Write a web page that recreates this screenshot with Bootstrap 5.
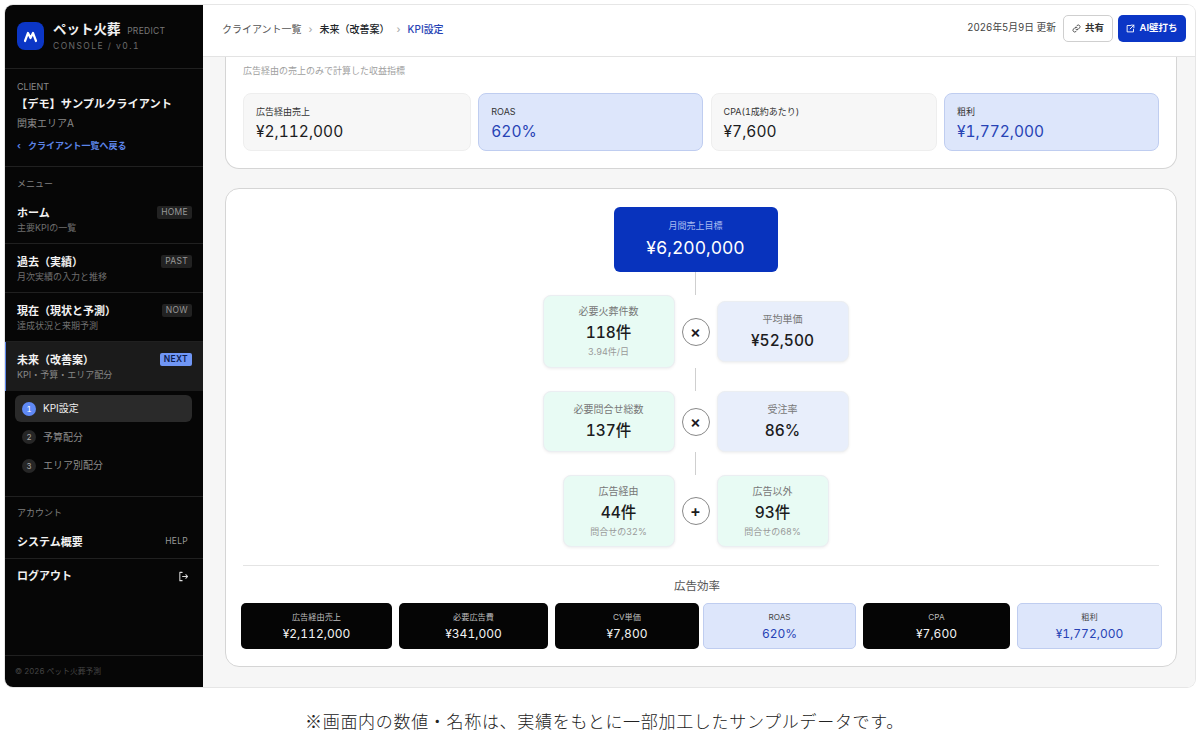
<!DOCTYPE html>
<html lang="ja">
<head>
  <meta charset="UTF-8">
  <meta name="viewport" content="width=device-width, initial-scale=1.0">
  <title>ペット火葬 PREDICT CONSOLE</title>
  <link rel="stylesheet" href="https://cdn.jsdelivr.net/npm/bootstrap@5.3.0/dist/css/bootstrap.min.css">
  <style>
    html, body { height: 751px; overflow: hidden; }
    body { background: #fff; color: #1c1c1e; font-family: Inter, "Noto Sans CJK JP", sans-serif; font-variant-numeric: tabular-nums; }
    .frame { height: 682px; margin: 5px 5px 0; border-radius: 8px; overflow: hidden; box-shadow: 0 0 0 1px #e6e6e6; }
    .side { width: 198px; background: #060606; color: #f2f2f2; }
    .side-sec { border-bottom: 1px solid #202020; padding-left: 12px; padding-right: 11px; }
    .brand { height: 64px; padding-top: 17px; gap: 9px; }
    .logo { width: 27px; height: 28px; border-radius: 8px; background: #0b36c6; }
    .brand-name { font-size: 13.5px; font-weight: 700; line-height: 16px; margin-top: -1px; }
    .brand-name small { font-size: 8.5px; font-weight: 400; color: #777; letter-spacing: .3px; margin-left: 3px; }
    .brand-sub { font-size: 8.5px; color: #6c6c6c; letter-spacing: 1.45px; margin-top: 1px; }
    .client { height: 98px; padding-top: 12px; }
    .client-label { font-size: 9px; line-height: 12px; color: #8a8a8a; }
    .client-name { font-size: 11.2px; font-weight: 700; line-height: 16px; margin-top: 3px; margin-left: -1px; }
    .client-area { font-size: 10px; color: #8a8a8a; line-height: 14px; margin-top: 4px; }
    .back { font-size: 9px; font-weight: 700; color: #5c84e8; line-height: 14px; margin-top: 9px; gap: 7px; text-decoration: none; }
    .sec-label { font-size: 9px; color: #808080; line-height: 12px; padding: 11px 12px 0; height: 28px; }
    .sec-label.acct-label { padding-top: 10px; }
    .item { height: 49px; padding-top: 10px; }
    .item-title { font-size: 11px; font-weight: 700; line-height: 16px; }
    .item-sub { font-size: 9px; color: #6f6f6f; line-height: 13px; }
    .tag { font-size: 8.5px; line-height: 13px; padding: 0 4px; border-radius: 2px; background: #222; color: #999; letter-spacing: .3px; }
    .tag-row { margin-top: 1px; }
    .item.active { background: #1b1b1b; box-shadow: inset 1px 0 0 #5c84e8; }
    .item.active .item-sub { color: #888; }
    .tag.next { background: #7096f5; color: #0b1c4f; font-weight: 600; }
    .steps { height: 106px; padding: 4px 11px 0 10px; }
    .step { height: 27px; margin-bottom: 1.5px; padding-left: 7px; gap: 7px; font-size: 10px; color: #8b8b8b; border-radius: 6px; }
    .step.active { background: #2a2a2a; color: #eee; }
    .step-no { width: 14px; height: 14px; border-radius: 50%; background: #262626; font-size: 8px; color: #aaa; }
    .step.active .step-no { background: #5f89f5; color: #fff; }
    .acct { height: 34px; }
    .logout-icon { margin-right: 3px; }
    .side-foot { padding: 10px 10px 0; font-size: 7.8px; color: #444; height: 32px; border-top: 1px solid #202020; }

    .main { background: #f6f6f6; min-width: 0; }
    .topbar { height: 52px; background: #fff; border-bottom: 1px solid #e3e3e3; padding: 0 9px 4px 19px; }
    .breadcrumb { --bs-breadcrumb-divider: '›'; --bs-breadcrumb-item-padding-x: 7px; --bs-breadcrumb-divider-color: #aaa; --bs-breadcrumb-item-active-color: #2743b5; font-size: 10px; line-height: 14px; margin: 0; color: #555; }
    .head-tools { gap: 5px; }
    .updated { font-size: 9.7px; color: #444; margin-right: 2px; }
    .btn-share, .btn-ai { height: 27px; font-size: 9.5px; font-weight: 600; padding: 0; gap: 4px; border-radius: 5px; }
    .btn-share { width: 50px; background: #fff; color: #333; border: 1px solid #cfcfcf; }
    .btn-ai { width: 68px; background: #0b36c6; color: #fff; border: 0; }

    .content { padding: 0 18px 20px 22px; gap: 19px; }
    .panel { background: #fff; border: 1px solid #d5d5d5; border-radius: 14px; }
    .panel-top { height: 112px; padding: 8px 17px 0; border-top: 0; border-top-left-radius: 0; border-top-right-radius: 0; }
    .panel-note { font-size: 9px; line-height: 11px; color: #a0a0a0; margin-bottom: 17px; }
    .kpis { display: grid; grid-template-columns: 228px 225px 226px 215px; gap: 7.3px; }
    .kpi { height: 58px; padding: 12px 12px 0; border-radius: 8px; background: #f7f7f7; border: 1px solid #eee; }
    .kpi-label { font-size: 9px; line-height: 12px; color: #333; }
    .kpi-val { font-size: 15.5px; line-height: 21px; margin-top: 3px; color: #1c1c1e; }
    .kpi.hl { background: #dde6fb; border-color: #bfcdf0; }
    .kpi.hl .kpi-val { color: #2743b5; }

    .panel-tree { height: 479px; padding: 18px 15px 0; }
    .tree { padding-right: 11px; }
    .tree-row { gap: 7px; }
    .goal { width: 164px; height: 65px; background: #0833bd; color: #fff; border-radius: 6px; }
    .goal-label { font-size: 9px; color: #a9bbf0; line-height: 13px; }
    .goal-val { font-size: 17.5px; line-height: 24px; margin-top: 4px; }
    .link-v { width: 1px; height: 23px; background: #cfcfcf; }
    .node { width: 132px; border-radius: 8px; border: 1px solid #ebeef2; box-shadow: 0 1px 3px rgba(0,0,0,.07); }
    .node.w112 { width: 112px; }
    .node.green { background: #e8fbf4; }
    .node.blue { background: #e8eefb; }
    .node-label { font-size: 10px; line-height: 13px; color: #777; }
    .node-val { font-size: 15.5px; font-weight: 500; line-height: 20px; margin-top: 5px; }
    .node-sub { font-size: 9px; line-height: 12px; color: #999; margin-top: 3px; }
    .h73 { height: 73px; } .h72 { height: 72px; } .h61 { height: 61px; }
    .op { width: 28px; height: 28px; border-radius: 50%; border: 1px solid #888; background: #fff; font-size: 16px; font-weight: 600; line-height: 1; }
    .rule { height: 1px; background: #e4e4e4; margin: 18px 2px 0; }
    .eff-title { font-size: 11.5px; line-height: 15px; color: #555; margin: 13px 0 9px; padding-right: 8px; }
    .effs { display: grid; grid-template-columns: 151px 149px 144px 150px 147px 145px; column-gap: 7px; }
    .eff { height: 46px; border-radius: 5px; background: #050505; color: #f2f2f2; }
    .eff.roas { margin-left: -3px; }
    .eff-label { font-size: 8.2px; line-height: 12px; color: #bdbdbd; }
    .eff-val { font-size: 12px; line-height: 16px; margin-top: 3px; }
    .eff.hl { background: #dde6fb; border: 1px solid #bfcdf0; color: #2743b5; }
    .eff.hl .eff-label { color: #444; }
    .caption { font-family: "Noto Sans CJK JP", sans-serif; font-weight: 300; font-size: 17px; line-height: 24px; letter-spacing: .69px; color: #222; margin-top: 22px; padding-left: 9px; }
  </style>
</head>
<body>
  <div class="frame d-flex">
    <aside class="side d-flex flex-column flex-shrink-0">
      <div class="side-sec brand d-flex">
        <div class="logo d-flex align-items-center justify-content-center flex-shrink-0">
          <svg width="15" height="13" viewBox="0 0 15 13" fill="none" stroke="#fff" stroke-width="2.2" stroke-linejoin="round" stroke-linecap="round"><path d="M2 11 5 3l2.500 5L10 3l3 8"/></svg>
        </div>
        <div>
          <div class="brand-name">ペット火葬 <small>PREDICT</small></div>
          <div class="brand-sub">CONSOLE / v0.1</div>
        </div>
      </div>
      <div class="side-sec client">
        <div class="client-label">CLIENT</div>
        <div class="client-name">【デモ】サンプルクライアント</div>
        <div class="client-area">関東エリアA</div>
        <a class="back d-flex" href="#"><span>‹</span><span>クライアント一覧へ戻る</span></a>
      </div>
      <div class="sec-label">メニュー</div>
      <div class="side-sec item d-flex justify-content-between">
        <div><div class="item-title">ホーム</div><div class="item-sub">主要KPIの一覧</div></div>
        <div class="tag-row"><span class="tag d-block">HOME</span></div>
      </div>
      <div class="side-sec item d-flex justify-content-between">
        <div><div class="item-title">過去（実績）</div><div class="item-sub">月次実績の入力と推移</div></div>
        <div class="tag-row"><span class="tag d-block">PAST</span></div>
      </div>
      <div class="side-sec item d-flex justify-content-between">
        <div><div class="item-title">現在（現状と予測）</div><div class="item-sub">達成状況と来期予測</div></div>
        <div class="tag-row"><span class="tag d-block">NOW</span></div>
      </div>
      <div class="side-sec item active d-flex justify-content-between border-0">
        <div><div class="item-title">未来（改善案）</div><div class="item-sub">KPI・予算・エリア配分</div></div>
        <div class="tag-row"><span class="tag next d-block">NEXT</span></div>
      </div>
      <div class="side-sec steps">
        <div class="step active d-flex align-items-center"><span class="step-no d-flex align-items-center justify-content-center">1</span>KPI設定</div>
        <div class="step d-flex align-items-center"><span class="step-no d-flex align-items-center justify-content-center">2</span>予算配分</div>
        <div class="step d-flex align-items-center"><span class="step-no d-flex align-items-center justify-content-center">3</span>エリア別配分</div>
      </div>
      <div class="sec-label acct-label">アカウント</div>
      <div class="side-sec acct d-flex justify-content-between align-items-center">
        <div class="item-title">システム概要</div>
        <span class="tag bg-transparent">HELP</span>
      </div>
      <div class="side-sec border-0 acct d-flex justify-content-between align-items-center">
        <div class="item-title">ログアウト</div>
        <svg class="logout-icon" width="11" height="11" viewBox="0 0 12 12" fill="none" stroke="#ddd" stroke-width="1.100" stroke-linecap="round" stroke-linejoin="round"><path d="M4.500 1.500H2v9h2.500M5 6h5.500M8.500 4l2 2-2 2"/></svg>
      </div>
      <div class="side-foot mt-auto">© 2026 ペット火葬予測</div>
    </aside>

    <main class="main flex-grow-1 d-flex flex-column">
      <header class="topbar d-flex align-items-center justify-content-between">
        <ol class="breadcrumb">
          <li class="breadcrumb-item">クライアント一覧</li>
          <li class="breadcrumb-item text-dark fw-medium">未来（改善案）</li>
          <li class="breadcrumb-item active fw-medium">KPI設定</li>
        </ol>
        <div class="head-tools d-flex align-items-center">
          <span class="updated">2026年5月9日 更新</span>
          <button class="btn btn-share d-flex align-items-center justify-content-center">
            <svg width="9" height="9" viewBox="0 0 12 12" fill="none" stroke="#444" stroke-width="1.200" stroke-linecap="round"><path d="M5 7a2.300 2.300 0 0 0 3.300 0l1.800-1.800A2.300 2.300 0 0 0 6.800 2l-.7.7M7 5a2.300 2.300 0 0 0-3.300 0L1.900 6.800A2.300 2.300 0 0 0 5.200 10l.7-.7"/></svg>
            共有
          </button>
          <button class="btn btn-ai d-flex align-items-center justify-content-center">
            <svg width="9" height="9" viewBox="0 0 12 12" fill="none" stroke="#fff" stroke-width="1.200" stroke-linecap="round" stroke-linejoin="round"><path d="M6 2H1.500v8.500H10V7M7 1.500h3.500V5M10.500 1.500 5.500 6.500"/></svg>
            AI壁打ち
          </button>
        </div>
      </header>

      <div class="content d-flex flex-column flex-grow-1">
        <section class="panel panel-top">
          <div class="panel-note">広告経由の売上のみで計算した収益指標</div>
          <div class="kpis">
            <div class="kpi"><div class="kpi-label">広告経由売上</div><div class="kpi-val">¥2,112,000</div></div>
            <div class="kpi hl"><div class="kpi-label">ROAS</div><div class="kpi-val">620%</div></div>
            <div class="kpi"><div class="kpi-label">CPA(1成約あたり)</div><div class="kpi-val">¥7,600</div></div>
            <div class="kpi hl"><div class="kpi-label">粗利</div><div class="kpi-val">¥1,772,000</div></div>
          </div>
        </section>

        <section class="panel panel-tree">
          <div class="tree d-flex flex-column align-items-center">
            <div class="goal d-flex flex-column align-items-center justify-content-center">
              <div class="goal-label">月間売上目標</div>
              <div class="goal-val">¥6,200,000</div>
            </div>
            <div class="link-v"></div>
            <div class="tree-row d-flex align-items-center">
              <div class="node green h73 d-flex flex-column align-items-center justify-content-center">
                <div class="node-label">必要火葬件数</div><div class="node-val">118件</div><div class="node-sub">3.94件/日</div>
              </div>
              <div class="op d-flex align-items-center justify-content-center">×</div>
              <div class="node blue h61 d-flex flex-column align-items-center justify-content-center">
                <div class="node-label">平均単価</div><div class="node-val">¥52,500</div>
              </div>
            </div>
            <div class="link-v"></div>
            <div class="tree-row d-flex align-items-center">
              <div class="node green h61 d-flex flex-column align-items-center justify-content-center">
                <div class="node-label">必要問合せ総数</div><div class="node-val">137件</div>
              </div>
              <div class="op d-flex align-items-center justify-content-center">×</div>
              <div class="node blue h61 d-flex flex-column align-items-center justify-content-center">
                <div class="node-label">受注率</div><div class="node-val">86%</div>
              </div>
            </div>
            <div class="link-v"></div>
            <div class="tree-row d-flex align-items-center">
              <div class="node w112 green h72 d-flex flex-column align-items-center justify-content-center">
                <div class="node-label">広告経由</div><div class="node-val">44件</div><div class="node-sub">問合せの32%</div>
              </div>
              <div class="op d-flex align-items-center justify-content-center">+</div>
              <div class="node w112 green h72 d-flex flex-column align-items-center justify-content-center">
                <div class="node-label">広告以外</div><div class="node-val">93件</div><div class="node-sub">問合せの68%</div>
              </div>
            </div>
          </div>
          <div class="rule"></div>
          <div class="eff-title text-center">広告効率</div>
          <div class="effs">
            <div class="eff d-flex flex-column align-items-center justify-content-center"><div class="eff-label">広告経由売上</div><div class="eff-val">¥2,112,000</div></div>
            <div class="eff d-flex flex-column align-items-center justify-content-center"><div class="eff-label">必要広告費</div><div class="eff-val">¥341,000</div></div>
            <div class="eff d-flex flex-column align-items-center justify-content-center"><div class="eff-label">CV単価</div><div class="eff-val">¥7,800</div></div>
            <div class="eff hl roas d-flex flex-column align-items-center justify-content-center"><div class="eff-label">ROAS</div><div class="eff-val">620%</div></div>
            <div class="eff d-flex flex-column align-items-center justify-content-center"><div class="eff-label">CPA</div><div class="eff-val">¥7,600</div></div>
            <div class="eff hl d-flex flex-column align-items-center justify-content-center"><div class="eff-label">粗利</div><div class="eff-val">¥1,772,000</div></div>
          </div>
        </section>
      </div>
    </main>
  </div>
  <p class="caption text-center mb-0">※画面内の数値・名称は、実績をもとに一部加工したサンプルデータです。</p>
  <script src="https://cdn.jsdelivr.net/npm/bootstrap@5.3.0/dist/js/bootstrap.bundle.min.js"></script>
</body>
</html>
